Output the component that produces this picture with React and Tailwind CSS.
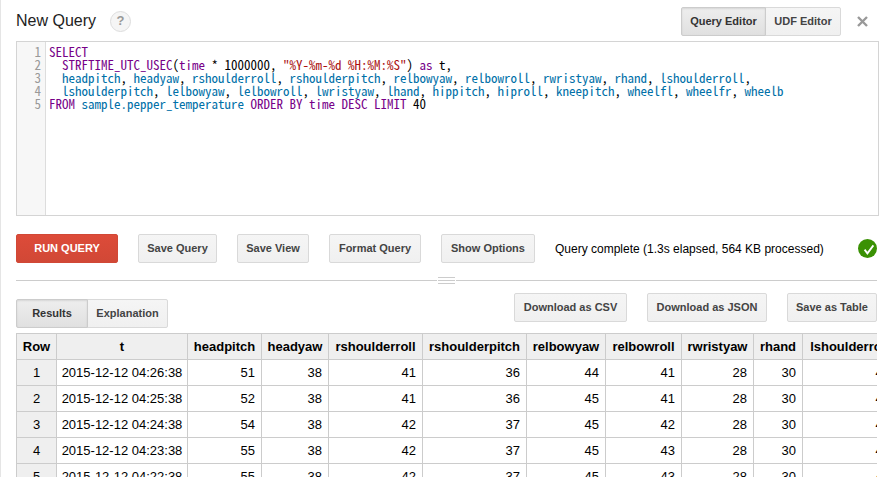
import { useState } from "react";

const INITIAL_QUERY = `SELECT
  STRFTIME_UTC_USEC(time * 1000000, "%Y-%m-%d %H:%M:%S") as t,
  headpitch, headyaw, rshoulderroll, rshoulderpitch, relbowyaw, relbowroll, rwristyaw, rhand, lshoulderroll,
  lshoulderpitch, lelbowyaw, lelbowroll, lwristyaw, lhand, hippitch, hiproll, kneepitch, wheelfl, wheelfr, wheelb
FROM sample.pepper_temperature ORDER BY time DESC LIMIT 40`;

const KEYWORDS = ["select", "strftime_utc_usec", "time", "as", "from", "order", "by", "desc", "limit"];

const COLUMNS = [
  { name: "Row", width: "w-[40px]" },
  { name: "t", width: "w-[131px]" },
  { name: "headpitch", width: "w-[74px]" },
  { name: "headyaw", width: "w-[67px]" },
  { name: "rshoulderroll", width: "w-[94px]" },
  { name: "rshoulderpitch", width: "w-[104px]" },
  { name: "relbowyaw", width: "w-[79px]" },
  { name: "relbowroll", width: "w-[76px]" },
  { name: "rwristyaw", width: "w-[72px]" },
  { name: "rhand", width: "w-[49px]" },
  { name: "lshoulderroll", width: "w-[94px]" },
];

const ROWS = [
  ["2015-12-12 04:26:38", 51, 38, 41, 36, 44, 41, 28, 30, 41],
  ["2015-12-12 04:25:38", 52, 38, 41, 36, 45, 41, 28, 30, 41],
  ["2015-12-12 04:24:38", 54, 38, 42, 37, 45, 42, 28, 30, 42],
  ["2015-12-12 04:23:38", 55, 38, 42, 37, 45, 43, 28, 30, 42],
  ["2015-12-12 04:22:38", 55, 38, 42, 37, 45, 43, 28, 30, 42],
];

const CODE_FONT =
  "pt-[3px] font-['Noto_Sans_Mono_CJK_JP','Liberation_Mono',monospace] text-[13px] leading-[13px] whitespace-pre";

const tokenClass = (token) => {
  if (token.startsWith('"')) return "text-[#aa1111]";
  if (KEYWORDS.includes(token.toLowerCase())) return "text-[#770088]";
  if (/^[a-z_][\w.]+$/i.test(token)) return "text-[#0070a8]";
  return "text-black";
};

function Button({ children, className = "" }) {
  return (
    <button
      type="button"
      className={`h-[29px] shrink-0 rounded-xs border border-[#d9d9d9] bg-linear-to-b from-[#f5f5f5] to-[#f0f0f0] text-[11px] font-bold whitespace-nowrap text-[#444] ${className}`}
    >
      {children}
    </button>
  );
}

function TabPair({ first, second, firstWidth, secondWidth }) {
  const [active, setActive] = useState(first);
  const tab = (name, shape) => (
    <button
      type="button"
      aria-pressed={active === name}
      onClick={() => setActive(name)}
      className={`h-[29px] border text-[11px] font-bold whitespace-nowrap ${shape} ${
        active === name
          ? "relative border-[#ccc] bg-linear-to-b from-[#eee] to-[#e0e0e0] text-[#333] shadow-[inset_0_1px_2px_rgba(0,0,0,0.1)]"
          : "border-[#d9d9d9] bg-linear-to-b from-[#f5f5f5] to-[#f0f0f0] text-[#444]"
      }`}
    >
      {name}
    </button>
  );
  return (
    <div className="flex shrink-0">
      {tab(first, `rounded-l-xs ${firstWidth}`)}
      {tab(second, `-ml-px rounded-r-xs ${secondWidth}`)}
    </div>
  );
}

function QueryBox() {
  const [query, setQuery] = useState(INITIAL_QUERY);
  const tokens = query.match(/"[^"]*"?|[a-z_][\w.]*|\s+|[^\sa-z_"]+/gi) || [];

  return (
    <div className="mr-[11px] ml-[15px] flex h-[175px] overflow-hidden border border-[#d4d4d4] bg-white">
      <div className={`w-[29px] shrink-0 border-r border-[#ddd] bg-[#f7f7f7] pr-[4px] text-right text-[#999] ${CODE_FONT}`}>
        {query.split("\n").map((_, i) => (
          <div key={i}>{i + 1}</div>
        ))}
      </div>
      <div className="relative min-w-0 grow">
        <pre aria-hidden="true" className={`pl-[3px] ${CODE_FONT}`}>
          {tokens.map((token, i) => (
            <span key={i} className={tokenClass(token)}>
              {token}
            </span>
          ))}
        </pre>
        {/* Typing happens here, the highlighted copy shows through */}
        <textarea
          aria-label="Query"
          spellCheck={false}
          value={query}
          onChange={(e) => setQuery(e.target.value)}
          className={`absolute inset-0 resize-none overflow-hidden bg-transparent pl-[3px] text-transparent caret-black outline-none ${CODE_FONT}`}
        />
      </div>
    </div>
  );
}

function ResultsTable() {
  return (
    <div className="mt-[5px] overflow-hidden">
      <table className="w-[881px] table-fixed border-collapse text-[13px] leading-[15px] text-black">
        <thead>
          <tr className="h-[26px] bg-[#efefef]">
            {COLUMNS.map((col) => (
              <th key={col.name} className={`border border-[#ccc] text-center font-bold ${col.width}`}>
                {col.name}
              </th>
            ))}
          </tr>
        </thead>
        <tbody>
          {ROWS.map(([time, ...values], i) => (
            <tr key={time} className="h-[26px]">
              <td className="border border-[#ccc] bg-[#efefef] text-center">{i + 1}</td>
              <td className="border border-[#ccc] text-center whitespace-nowrap">{time}</td>
              {values.map((value, j) => (
                <td key={j} className="border border-[#ccc] pr-[6px] text-right">
                  {value}
                </td>
              ))}
            </tr>
          ))}
        </tbody>
      </table>
    </div>
  );
}

function App() {
  return (
    <div className="h-screen overflow-hidden border-l border-[#e5e5e5] bg-white font-['Liberation_Sans',Arial,sans-serif]">
      {/* Title bar */}
      <div className="flex h-[41px] items-center pt-px pr-[22px] pl-[15px]">
        <h1 className="text-[16px] leading-5 text-[#222]">New Query</h1>
        <button
          type="button"
          aria-label="Help"
          className="ml-[14px] size-[21px] rounded-full border border-[#ddd] bg-[#f5f5f5] text-[13px] leading-[18px] font-bold text-[#999]"
        >
          ?
        </button>
        <div className="ml-auto">
          <TabPair first="Query Editor" second="UDF Editor" firstWidth="w-[85px]" secondWidth="w-[76px]" />
        </div>
        <button type="button" aria-label="Close" className="ml-4">
          <svg className="size-[11px]" viewBox="0 0 11 11" fill="none" stroke="#999" strokeWidth="2.4">
            <path d="M1 1l9 9M10 1l-9 9" />
          </svg>
        </button>
      </div>

      <QueryBox />

      <div className="mr-[13px] ml-[15px]">
        {/* Query actions */}
        <div className="mt-[18px] flex items-center gap-5">
          <button
            type="button"
            className="h-[29px] w-[102px] shrink-0 rounded-xs border border-[#d14836] bg-linear-to-b from-[#dd4b39] to-[#d14836] text-[11px] font-bold whitespace-nowrap text-white"
          >
            RUN QUERY
          </button>
          <Button className="w-[79px]">Save Query</Button>
          <Button className="w-[72px]">Save View</Button>
          <Button className="w-[92px]">Format Query</Button>
          <Button className="w-[94px]">Show Options</Button>
          <span className="text-[12px] whitespace-nowrap text-black">
            Query complete (1.3s elapsed, 564 KB processed)
          </span>
          <svg className="ml-auto size-[19px] shrink-0" viewBox="0 0 19 19" role="img" aria-label="Valid">
            <circle cx="9.5" cy="9.5" r="9.5" fill="#3a9104" />
            <path d="M6.6 10.6l2.8 3.8L15.4 6.4" fill="none" stroke="#fff" strokeWidth="1.8" />
          </svg>
        </div>

        {/* Resize handle */}
        <div className="mt-[14px] flex h-[7px] items-center gap-px">
          <div className="h-px grow bg-[#ccc]" />
          <div className="flex w-[17px] flex-col gap-[2px]">
            <div className="h-px bg-[#ccc]" />
            <div className="h-px bg-[#ccc]" />
            <div className="h-px bg-[#ccc]" />
          </div>
          <div className="h-px grow bg-[#ccc]" />
        </div>

        {/* Results toolbar */}
        <div className="mt-[9px] flex items-start">
          <div className="pt-[6px]">
            <TabPair first="Results" second="Explanation" firstWidth="w-[72px]" secondWidth="w-[81px]" />
          </div>
          <div className="ml-auto flex gap-5">
            <Button className="w-[113px]">Download as CSV</Button>
            <Button className="w-[120px]">Download as JSON</Button>
            <Button className="w-[90px]">Save as Table</Button>
          </div>
        </div>

        <ResultsTable />
      </div>
    </div>
  );
}

export default App;
